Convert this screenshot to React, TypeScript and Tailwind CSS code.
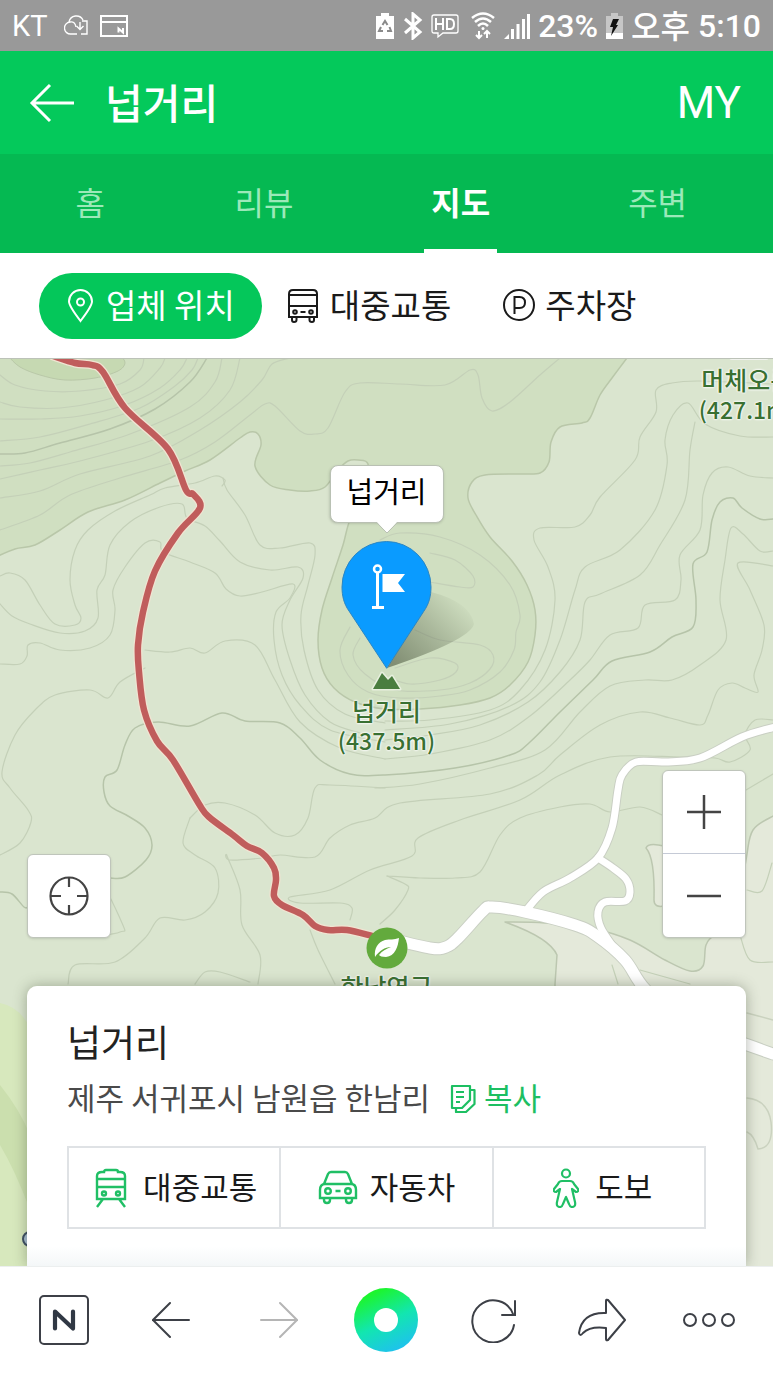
import { useState } from "react";
import type { ReactNode } from "react";
import clsx from "clsx";

type Pt = [number, number];

const TABS = ["홈", "리뷰", "지도", "주변"];

/** Parses "x,y x,y ..." and joins the points with a soft curve. */
function curve(src: string) {
  const p = src.split(" ").map((s) => s.split(",").map(Number) as Pt);
  let d = `M${p[0][0]} ${p[0][1]}`;
  for (let i = 0; i < p.length - 1; i++) {
    const a = p[i - 1] ?? p[i];
    const b = p[i];
    const c = p[i + 1];
    const e = p[i + 2] ?? c;
    d += `C${b[0] + (c[0] - a[0]) / 6} ${b[1] + (c[1] - a[1]) / 6} ${c[0] - (e[0] - b[0]) / 6} ${c[1] - (e[1] - b[1]) / 6} ${c[0]} ${c[1]}`;
  }
  return d;
}

const FOREST =
  "-4,557 15,549 35,545 60,530 88,512 125,500 160,483 185,471 210,460 240,438 250,432 258,434 261,445 255,466 270,485 290,490 310,491 325,487 338,470 348,461 358,460 368,464 366,490 350,520 343,545 332,578 322,610 318,640 322,668 334,688 355,702 385,709 420,709 460,705 490,698 510,685 528,662 535,635 535,610 527,585 512,561 490,537 476,515 468,498 472,482 485,475 520,474 540,473 549,462 551,442 560,427 582,423 590,418 600,395 612,378 630,354";

const CONTOURS = [
  "0,375 15,385 45,391 80,391 120,384 140,370 144,358",
  "0,402 20,407 60,408 105,400 140,387 160,368 165,358",
  "0,419 40,419 80,416 125,405 160,388 180,370 187,358",
  "0,441 40,437 90,424 140,408 175,386 192,370 198,358",
  "0,466 30,463 70,452 130,434 190,407 215,382 222,358",
  "0,479 40,470 80,461 150,441 200,418 230,390 240,358",
  "0,498 40,491 80,474 150,456 200,430 240,402 262,380 272,364 290,358",
  "0,530 40,515 70,495 120,478 180,460 215,442 250,415 265,404 275,406 300,431 315,434 328,428 345,392 360,383 400,384 445,385 470,370 478,375 482,398 492,411 510,402 540,375 560,358",
  "222,486 225,480 215,476 195,483 165,488 150,495 115,511 88,530 75,550 70,580 75,605 81,618 75,625 55,624 40,605 25,580 10,573 0,576",
  "0,604 12,616 30,624 60,633 85,631 98,618 97,590 105,575 110,545 130,522 160,507 182,504 187,518 205,526 220,541 240,562 270,570 298,567 303,578 290,600 282,625 290,660 305,695 330,722 360,733",
  "0,664 20,664 27,656 28,645 40,643 60,650 90,648 110,635 115,610 113,590 125,567 145,543 160,542 163,552 190,562 215,573 226,589 240,596 262,592 293,584 290,598 276,612 274,640 282,675 300,705 330,730 385,742",
  "223,478 227,490 245,515 260,545 280,548 310,543 315,555 308,585 301,615 304,650 318,690 345,714 385,723",
  "145,650 170,652 190,648 205,653 225,641 255,645 275,680 300,722 340,748 385,759",
  "0,855 20,843 31,822 28,810 10,788 2,772 15,735 35,710 55,695 90,690 108,698 120,682 145,668",
  "350,627 340,650 348,675 368,692 400,698 440,696 470,690 500,672 514,650 516,632 520,615 510,585 480,555 440,537 400,533 380,540",
  "360,638 353,655 365,674 395,690 440,690 470,683 490,669 493,655 480,645 440,640 415,630",
  "395,668 430,658 455,663 456,672 440,680 410,684 390,678",
  "430,553 455,560 473,576 473,587 460,587 430,582",
  "773,384 700,381 672,383 656,390 656,412 640,437 635,460 600,497 590,515 575,527 540,528 534,540 548,567 555,600 545,650 520,690 490,710 430,720 385,721",
  "773,437 740,436 705,424 688,403 673,415 665,440 667,465 655,510 620,550 585,567 575,590 560,640 540,682 510,706 450,724 385,730",
  "695,422 690,450 685,500 660,545 640,575 600,594 585,602 580,640 560,672 528,702 480,725 430,735 385,740",
  "773,478 750,476 728,467 712,473 703,495 700,530 680,555 681,580 675,600 645,605 638,628 610,635 590,660 570,680 530,716 490,740 430,754 385,759",
  "773,551 760,551 743,534 731,528 725,560 720,600 726,640 700,665 672,680 645,680 610,686 580,712 545,750 490,768 420,784 375,788",
  "773,566 738,563 750,590 764,625 762,650 754,675 758,692 745,688 732,683 718,690 708,715 700,725 670,718 640,712 600,725 560,755 538,775 490,794 400,803 375,818 350,825 330,838 315,857 280,855 262,858 230,860 227,856 240,890 242,925 260,955 258,984",
  "773,720 755,720 745,735 750,750 730,762 715,758 680,757 610,757 560,775 520,800 460,820 418,838 412,856 370,870 330,890 290,897 300,903 340,903 352,908 350,920",
  "190,818 205,805 225,803 255,815 275,833 295,835 308,818 315,788 330,785 385,788",
  "190,818 183,843 195,855 215,868 218,893 205,912 185,920 160,918 145,938 115,962 75,965 68,984",
  "387,876 420,878 455,878 480,872 500,835 520,818 560,807 590,804 610,812 640,807 662,815",
  "387,876 405,884 408,890 395,910 380,924",
  "195,984 205,972 220,972 250,982",
  "310,930 318,950 335,984",
  "70,860 90,862 122,923 120,932 92,937",
  "746,790 773,774",
  "747,890 762,891 772,863",
  "740,935 750,960 773,962",
  "612,965 618,984",
  "640,970 690,984",
];

const BOLD_CONTOURS = [
  "0,454 25,453 60,443 110,429 155,409 190,382 207,358",
  "0,892 12,894 24,907 28,907",
  "110,878 125,877 146,860 152,845 145,828 128,816 110,806 104,792 105,777 117,770 125,745 135,728 158,722 190,726 222,713 245,721 280,723 300,738 320,760 350,774 385,775 455,768 510,755 530,742 560,712 593,680 612,661 650,652 672,637 693,627 696,600 693,564 707,552 712,520 720,502 733,498 742,508 760,519 773,519",
];

const RED_ROAD =
  "53,356 75,363 92,365 103,372 125,408 168,449 186,490 193,494 200,508 178,533 155,571 143,612 138,645 139,672 144,710 157,741 173,760 199,804 209,817 233,835 247,846 262,853 274,868 276,880 274,896 282,905 303,915 315,926 328,930 347,930 372,936";
const MAIN_ROAD = "387,938 430,948 446,947 458,938 483,911 492,907 525,912 575,925 597,936 625,960 646,990 690,1025 745,1044 773,1054";
const SIDE_ROADS = [
  "525,912 543,892 570,878 598,858 612,828 618,790 622,775 636,762 665,762 700,758 742,737 775,727",
  "598,858 613,868 626,879 630,892 625,901 605,902 598,912 601,928 614,948",
];

function MapCanvas() {
  return (
    <svg
      className="absolute inset-0 size-full"
      viewBox="0 359 773 907"
      preserveAspectRatio="xMidYMin slice"
      fill="none"
      strokeLinecap="round"
      strokeLinejoin="round"
      aria-hidden="true"
    >
      <defs>
        <linearGradient id="pinShadow" x1="395" y1="664" x2="462" y2="598" gradientUnits="userSpaceOnUse">
          <stop offset="0" stopColor="#4d5940" stopOpacity="0.6" />
          <stop offset="0.55" stopColor="#4d5940" stopOpacity="0.28" />
          <stop offset="1" stopColor="#4d5940" stopOpacity="0" />
        </linearGradient>
      </defs>
      <rect y="358" width="773" height="908" fill="#dae5cf" />
      <path d={`${curve(FOREST)}L-4 354Z`} fill="#d0dfc1" stroke="#b9c7a9" strokeWidth="1.5" />
      <path d={`${curve("8,356 20,367 40,375 65,380 95,378 118,371 125,363 121,356")}Z`} fill="#c6d9b2" stroke="#b9c8a8" />
      <path
        d={`${curve("505,922 545,923 590,928 630,940 665,960 690,971 703,966 706,945 715,935 735,925 746,860 753,830 775,815")}L777 1270H555V984L557 955Q550 938 505 922Z`}
        fill="#e4e9da"
        stroke="#bcc7b0"
        strokeWidth="1.5"
      />
      <path d="M664 846Q648 842 646 848Q655 858 654 900Q654 908 664 906" fill="#e4e9da" stroke="#bcc7b0" strokeWidth="1.5" />
      <path d="M0 1003Q20 1007 30 1028V1266H0Z" fill="#d7e8bd" />
      <path d="M0 1085Q20 1110 30 1135V1210Q15 1170 0 1145Z" fill="#cbdfae" />
      <g stroke="#c4d0b8" strokeWidth="1.2">
        {CONTOURS.map((c) => (
          <path key={c} d={curve(c)} />
        ))}
      </g>
      <g stroke="#b6c4a9" strokeWidth="1.5">
        {BOLD_CONTOURS.map((c) => (
          <path key={c} d={curve(c)} />
        ))}
        <path d="M747 1013L773 1020M747 1098Q768 1100 771 1122Q774 1148 758 1149Q754 1135 747 1132" stroke="#cad2bf" />
      </g>
      <g stroke="#c9cfc3">
        {SIDE_ROADS.map((c) => (
          <path key={c} d={curve(c)} strokeWidth="9" />
        ))}
        <path d={curve(MAIN_ROAD)} strokeWidth="13" />
      </g>
      <g stroke="#fff">
        {SIDE_ROADS.map((c) => (
          <path key={c} d={curve(c)} strokeWidth="7" />
        ))}
        <path d={curve(MAIN_ROAD)} strokeWidth="11" />
      </g>
      <path d={curve(RED_ROAD)} stroke="#f0e4d2" strokeWidth="9" />
      <path d={curve(RED_ROAD)} stroke="#c05d5c" strokeWidth="6.5" />
      <path d="M732 357H766" stroke="#f1f3ee" strokeWidth="6" />

      {/* peak */}
      <path d="M373 689L382 673L388 680L392 676L400 689Z" fill="#4a7d3f" stroke="#e8f0df" strokeWidth="3" paintOrder="stroke" />

      {/* pin */}
      <path d="M387 668L431 592Q470 602 474 624Q470 640 387 668Z" fill="url(#pinShadow)" />
      <path
        d="M386.5 668L349 611C344 604 342 596 342 587A44.5 45.5 0 0 1 431 587C431 596 429 604 424 611Z"
        fill="#0a9bff"
        stroke="#2a86c4"
        strokeWidth="1"
      />
      <circle cx="377.5" cy="569" r="3.5" stroke="#fff" strokeWidth="2.5" />
      <path d="M377.5 573V607M372 607.500H384" stroke="#fff" strokeWidth="3" strokeLinecap="butt" />
      <path d="M382.5 574H405L398 583L405 592H382.5Z" fill="#fff" />

      {/* trail head */}
      <circle cx="387" cy="948" r="20.5" fill="#63aa3d" />
      <path
        d="M375 957C374 948 378 942 385 940C390 939 394 940 399 938C398 947 395 956 386 957C382 957 380 956 379 955C382 951 386 949 391 947C385 947 379 951 375 957Z"
        fill="#fff"
      />
      <circle cx="30" cy="1239" r="7" fill="#a9bfd6" stroke="#3c4d63" strokeWidth="2" />
    </svg>
  );
}

function StatusBar() {
  return (
    <div className="flex h-[51px] items-center justify-between bg-[#999] px-3 font-['Roboto','Noto_Sans_CJK_KR',sans-serif] text-[32px] leading-10 text-white">
      <div className="flex items-center">
        <span className="text-[29px]">KT</span>
        <svg className="ml-4 h-6 w-6" viewBox="0 0 24 24" fill="none" stroke="currentColor" strokeWidth="1.4">
          <path d="M13 20H7A6 6 0 0 1 6 8Q11 7 12 13M5 8A7.5 7.5 0 0 1 19 6" />
          <path d="M18 7H23V20H17M16 8V15M12.5 12L16 15.5L19.5 12" />
        </svg>
        <svg className="ml-3 h-6 w-7" viewBox="0 0 28 24" fill="none" stroke="currentColor" strokeWidth="2">
          <path d="M1 2H27V22H1ZM1 8H27" />
          <path d="M18.5 18.5V14.5L23 18.5V14" />
        </svg>
      </div>
      <div className="flex items-center font-medium">
        <svg className="h-7 w-5" viewBox="0 0 20 28" fill="none">
          <path d="M1 4H6V1H14V4H19V27H1Z" fill="#fff" />
          <path d="M7.5 13L10 9L12.5 13M14.5 15L16 19H12M8 19H4L6 15" stroke="#8a8a8a" strokeWidth="2" />
        </svg>
        <svg className="ml-2 h-7 w-5" viewBox="0 0 20 28" fill="none" stroke="currentColor" strokeWidth="3">
          <path d="M2 7L17 20L10 26V2L17 8L2 21" />
        </svg>
        <svg className="ml-2 h-7 w-7" viewBox="0 0 28 28" fill="none" stroke="currentColor">
          <path d="M3 3H25Q27 3 27 5V19Q27 21 25 21H12L7 25V21H3Q1 21 1 19V5Q1 3 3 3Z" strokeWidth="1.3" />
          <path d="M5 6V18M12 6V18M5 12H12M16 7V17H19Q23 17 23 12Q23 7 19 7Z" strokeWidth="2" />
        </svg>
        <svg className="ml-3 h-7 w-6" viewBox="0 0 24 28" fill="none" stroke="currentColor" strokeWidth="2.5">
          <path d="M1 6Q12 -3 23 6M4 10Q12 3 20 10M7 14Q12 9 17 14" />
          <circle cx="12" cy="16.5" r="1.5" fill="currentColor" stroke="none" />
          <path d="M8 19V26M5 23L8 26L11 23M16 26V19M13 22L16 19L19 22" strokeWidth="2" />
        </svg>
        <svg className="ml-2 h-7 w-[27px]" viewBox="0 0 27 28" fill="none" stroke="currentColor" strokeWidth="3">
          <path d="M1 27L6 22V27Z" fill="currentColor" stroke="none" />
          <path d="M9.500 27V17M15 27V12M20.500 27V7M25.500 27V2" />
        </svg>
        <span className="ml-2">23%</span>
        <svg className="ml-2 h-7 w-[17px]" viewBox="0 0 17 28">
          <path d="M0 4H5V1H12V4H17V27H0Z" fill="#c6c6c6" />
          <path d="M0 21H17V27H0Z" fill="#fff" />
          <path d="M7 7H13L10 13H12L5 24L7 15H4Z" fill="#111" />
        </svg>
        <span className="ml-2 pb-1 font-['Noto_Sans_CJK_KR',sans-serif]">오후</span>
        <span className="ml-2">5:10</span>
      </div>
    </div>
  );
}

function BusIcon() {
  return (
    <svg className="mr-3 h-9 w-[30px]" viewBox="0 0 30 36" fill="none" stroke="currentColor" strokeWidth="2">
      <path d="M1 29V6Q1 2 5 2H25Q29 2 29 6V29ZM1 7H29M1 18H29" />
      <path d="M4 29V32Q4 34 6 34Q8.5 34 8.5 32V29M21.5 29V32Q21.5 34 24 34Q26 34 26 32V29M12.5 24H17.5" />
      <circle cx="7" cy="24" r="1.8" />
      <circle cx="23" cy="24" r="1.8" />
    </svg>
  );
}

function Chip({ icon, label, active, onClick }: { icon: ReactNode; label: string; active: boolean; onClick: () => void }) {
  return (
    <button
      type="button"
      onClick={onClick}
      className={clsx(
        "flex h-[66px] items-center whitespace-nowrap rounded-full text-[33px] leading-10 cursor-pointer",
        active ? "bg-[#04c75a] px-[27px] text-white" : "px-[26px] text-[#1a1a1a]"
      )}
    >
      {icon}
      <span className="pb-1">{label}</span>
    </button>
  );
}

function MapLabel({ name, height, className }: { name: string; height?: string; className: string }) {
  return (
    <div
      className={clsx(
        "absolute flex flex-col items-center whitespace-nowrap text-[25px] font-medium leading-[30px] text-[#397032] [text-shadow:0_0_2px_#fff,0_0_2px_#fff,0_0_3px_#fff]",
        className
      )}
    >
      <span>{name}</span>
      {height && <span className="text-[23px]">{height}</span>}
    </div>
  );
}

function RouteButton({ icon, label }: { icon: ReactNode; label: string }) {
  return (
    <button
      type="button"
      className="flex h-[79px] flex-1 items-center justify-center gap-3 whitespace-nowrap text-[31px] leading-10 text-[#1a1a1a] cursor-pointer"
    >
      {icon}
      <span className="pb-1">{label}</span>
    </button>
  );
}

function NavButton({ label, children }: { label: string; children: ReactNode }) {
  return (
    <button type="button" aria-label={label} className="flex items-center justify-center text-[#3d4047] cursor-pointer">
      {children}
    </button>
  );
}

export default function App() {
  const [tab, setTab] = useState("지도");
  const [filter, setFilter] = useState("place");

  return (
    <div className="flex min-h-screen flex-col overflow-hidden bg-white font-['Noto_Sans_CJK_KR','Noto_Sans',sans-serif]">
      <StatusBar />

      <header className="flex h-[103px] items-center bg-[#04c95b] pl-[29px] pr-8 text-white">
        <button type="button" aria-label="뒤로" className="cursor-pointer">
          <svg className="h-10 w-[46px]" viewBox="0 0 46 40" fill="none" stroke="currentColor" strokeWidth="3">
            <path d="M45 20H3M21 2L3 20L21 38" />
          </svg>
        </button>
        <h1 className="ml-[30px] flex-1 pb-1 text-[41px] font-medium leading-[52px]">넙거리</h1>
        <a href="#my" className="font-['Roboto',sans-serif] text-[44px] leading-[52px]">
          MY
        </a>
      </header>

      <nav className="grid h-[99px] grid-cols-[150fr_196fr_196fr_196fr] bg-[#05b952] pl-[15px] pr-[17px]">
        {TABS.map((t) => (
          <button
            key={t}
            type="button"
            onClick={() => setTab(t)}
            className={clsx(
              "mx-auto border-b-4 px-[7px] pb-[2px] text-[32px] leading-10 cursor-pointer",
              t === tab ? "border-white font-bold text-white" : "border-transparent text-[#9be9b9]"
            )}
          >
            {t}
          </button>
        ))}
      </nav>

      <div className="flex h-[105px] items-center pl-[39px]">
        <Chip
          label="업체 위치"
          active={filter === "place"}
          onClick={() => setFilter("place")}
          icon={
            <svg className="mr-3 h-9 w-7" viewBox="0 0 28 36" fill="none" stroke="currentColor" strokeWidth="2">
              <path d="M14.5 33Q3 18 3 13.5A11.5 11.5 0 0 1 26 13.5Q26 18 14.5 33Z" />
              <circle cx="14.5" cy="14" r="3.5" />
            </svg>
          }
        />
        <Chip label="대중교통" active={filter === "transit"} onClick={() => setFilter("transit")} icon={<BusIcon />} />
        <Chip
          label="주차장"
          active={filter === "parking"}
          onClick={() => setFilter("parking")}
          icon={
            <svg className="mr-2 h-9 w-[34px]" viewBox="0 0 34 36" fill="none" stroke="currentColor" strokeWidth="2">
              <circle cx="16" cy="17" r="15" />
              <path d="M11.5 26V9H16.5Q22 9 22 14.5Q22 20 16.5 20H11.5" />
            </svg>
          }
        />
      </div>

      <main className="relative flex flex-1 flex-col justify-end overflow-hidden border-t border-[#bcc2b8] px-[27px] pt-[410px]">
        <MapCanvas />
        <MapLabel name="머체오름" height="(427.1m)" className="-right-[23px] top-[5px]" />
        <MapLabel name="넙거리" height="(437.5m)" className="left-1/2 top-[336px] -translate-x-1/2" />
        <MapLabel name="한남연구" className="left-1/2 top-[612px] -translate-x-1/2" />

        <div className="absolute left-1/2 top-[106px] -translate-x-1/2 rounded-lg border border-[#b9c0b3] bg-white px-4 pt-1 pb-3 text-[29px] leading-10 text-black shadow-sm">
          넙거리
          <svg className="absolute left-1/2 top-full h-3 w-6 -translate-x-1/2" viewBox="0 0 24 12">
            <path d="M1 -1L12 11L23 -1Z" fill="#fff" />
            <path d="M1 0L12 11L23 0" fill="none" stroke="#b9c0b3" />
          </svg>
        </div>

        <div className="relative flex items-end justify-between">
          <button
            type="button"
            aria-label="현재 위치"
            className="flex size-[84px] items-center justify-center rounded-md border border-[#bfc5bb] bg-white text-[#444] shadow-sm cursor-pointer"
          >
            <svg className="size-10" viewBox="0 0 40 40" fill="none" stroke="currentColor" strokeWidth="2.2">
              <circle cx="20" cy="20" r="18.5" />
              <path d="M20 2V11M20 29V38M2 20H12M28 20H38" />
            </svg>
          </button>
          <div className="w-[84px] overflow-hidden rounded-md border border-[#bfc5bb] bg-white text-[#444] shadow-sm">
            <button
              type="button"
              aria-label="확대"
              className="flex h-[83px] w-full items-center justify-center border-b border-[#c5cad6] cursor-pointer"
            >
              <svg className="size-9" viewBox="0 0 36 36" stroke="currentColor" strokeWidth="2.5">
                <path d="M18 1V35M1 18H35" />
              </svg>
            </button>
            <button type="button" aria-label="축소" className="flex h-[83px] w-full items-center justify-center cursor-pointer">
              <svg className="size-9" viewBox="0 0 36 36" stroke="currentColor" strokeWidth="2.5">
                <path d="M1 18H35" />
              </svg>
            </button>
          </div>
        </div>

        <section className="relative mt-12 rounded-t-[10px] bg-gradient-to-b from-white from-93% to-[#f4f7f8] px-10 pb-[37px] pt-[33px] shadow-[0_0_14px_rgba(60,70,50,0.4)]">
          <h2 className="text-[37px] leading-[44px] text-[#222]">넙거리</h2>
          <div className="mt-[14px] flex items-center text-[31px] leading-10">
            <p className="text-[#4a4a4a]">제주 서귀포시 남원읍 한남리</p>
            <button type="button" className="ml-5 flex items-center text-[#1dbf62] cursor-pointer">
              <svg className="mr-2 h-8 w-[26px]" viewBox="0 0 26 32" fill="none" stroke="currentColor" strokeWidth="2.2" strokeLinejoin="round">
                <path d="M2 5H20V19L12 27H2Z" />
                <path d="M20 9H24.5V23L16 31H6V27M6 11H14M6 16H14M6 21H10" />
              </svg>
              복사
            </button>
          </div>
          <div className="mt-[29px] flex divide-x-2 divide-[#dfe2e5] border-2 border-[#dfe2e5]">
            <RouteButton
              label="대중교통"
              icon={
                <svg className="mx-1 h-10 w-8 text-[#20bf65]" viewBox="0 0 32 40" fill="none" stroke="currentColor" strokeWidth="2.4">
                  <path d="M2 31V8Q2 4 7 4H9Q9 2 11 2H21Q23 2 23 4H25Q30 4 30 8V31ZM2 11H30M2 19H30M8 31L2 39M24 31L30 39" />
                  <circle cx="9" cy="25.5" r="2" />
                  <circle cx="23" cy="25.5" r="2" />
                </svg>
              }
            />
            <RouteButton
              label="자동차"
              icon={
                <svg className="h-9 w-10 text-[#20bf65]" viewBox="0 0 40 36" fill="none" stroke="currentColor" strokeWidth="2.4">
                  <path d="M6 14L10 4Q11 2 13 2H27Q29 2 30 4L34 14M2 28V20Q2 14 7 14H33Q38 14 38 20V28Z" />
                  <path d="M6 28V30Q6 33 9 33Q12 33 12 30V28M28 28V30Q28 33 31 33Q34 33 34 30V28M17.5 21H22.5" />
                  <circle cx="10" cy="21" r="2.8" />
                  <circle cx="30" cy="21" r="2.8" />
                </svg>
              }
            />
            <RouteButton
              label="도보"
              icon={
                <svg className="ml-2 mr-1 h-10 w-[26px] text-[#20bf65]" viewBox="0 0 26 40" fill="none" stroke="currentColor" strokeWidth="2.2" strokeLinejoin="round">
                  <circle cx="13" cy="5.5" r="4" />
                  <path d="M9 13H17Q20 13 21 16L25 21Q26 24 23 24L19 21L22 34Q23 39 19 39Q17 39 16 36L13 29L10 36Q9 39 7 39Q3 39 4 34L7 21L3 24Q0 24 1 21L5 16Q6 13 9 13Z" />
                </svg>
              }
            />
          </div>
        </section>
      </main>

      <footer className="grid h-[108px] grid-cols-7 border-t border-[#ecefef] bg-white px-[10px] pb-[2px]">
        <NavButton label="네이버 홈">
          <svg className="size-[50px]" viewBox="0 0 50 50" fill="none" stroke="currentColor">
            <rect x="1" y="1" width="48" height="48" rx="4" strokeWidth="2" />
            <path d="M16 33.5V16.5L34 33.5V16.5" stroke="#303844" strokeWidth="4.2" strokeLinecap="round" strokeLinejoin="round" />
          </svg>
        </NavButton>
        <NavButton label="이전">
          <svg className="h-10 w-[38px]" viewBox="0 0 38 40" fill="none" stroke="currentColor" strokeWidth="2" strokeLinecap="round">
            <path d="M37 20H1L18 3M1 20L18 37" />
          </svg>
        </NavButton>
        <NavButton label="다음">
          <svg className="h-10 w-[38px] text-[#b5b5b5]" viewBox="0 0 38 40" fill="none" stroke="currentColor" strokeWidth="2" strokeLinecap="round">
            <path d="M1 20H37L20 3M37 20L20 37" />
          </svg>
        </NavButton>
        <NavButton label="그린닷">
          <span className="flex size-[64px] items-center justify-center rounded-full bg-[linear-gradient(155deg,#1cf52e_15%,#12e6b0_52%,#1fc0f0_90%)]">
            <span className="size-6 rounded-full bg-white" />
          </span>
        </NavButton>
        <NavButton label="새로고침">
          <svg className="size-[46px]" viewBox="0 0 46 46" fill="none" stroke="currentColor" strokeWidth="2" strokeLinecap="round">
            <path d="M43 28A21 21 0 1 1 42 17M44 4V18H31" />
          </svg>
        </NavButton>
        <NavButton label="공유">
          <svg className="h-[44px] w-12" viewBox="0 0 48 44" fill="none" stroke="currentColor" strokeWidth="2" strokeLinejoin="round">
            <path d="M28 15V3Q28 1 30 2L47 22L30 42Q28 43 28 41V30Q12 28 5 35Q2 39 1 35Q4 14 28 15Z" />
          </svg>
        </NavButton>
        <NavButton label="더보기">
          <svg className="h-4 w-[52px]" viewBox="0 0 52 16" fill="none" stroke="currentColor" strokeWidth="2">
            <circle cx="7" cy="8" r="6" />
            <circle cx="26" cy="8" r="6" />
            <circle cx="45" cy="8" r="6" />
          </svg>
        </NavButton>
      </footer>
    </div>
  );
}
